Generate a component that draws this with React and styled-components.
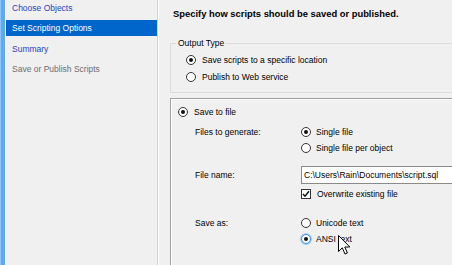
import React from "react";
import styled, { createGlobalStyle } from "styled-components";

const Global = createGlobalStyle`
    body {
        margin: 0;
        background: #f0f0f0;
    }
    * {
        box-sizing: border-box;
    }
`;

const Window = styled.div`
    position: relative;
    display: flex;
    width: 452px;
    height: 265px;
    overflow: hidden;
    background: #f0f0f0;
    font-family: "Liberation Sans", Arial, sans-serif;
    font-size: 8.5px;
    color: #000;
`;

const Strip = styled.div`
    width: 6px;
    flex-shrink: 0;
    background: linear-gradient(to right, #8fc6f8 0 1px, #5eaaf2 1px 5px, #ffffff 5px 6px);
`;

const Nav = styled.div`
    width: 152px;
    flex-shrink: 0;
    display: flex;
    flex-direction: column;
    gap: 4.4px;
    border-right: 1px solid #d2d2d2;
`;

const NavItem = styled.div`
    height: 16px;
    line-height: 16px;
    padding-left: 6px;
    white-space: nowrap;
    color: ${(p) => (p.$selected ? "#fff" : p.$disabled ? "#6d6d6d" : "#1d45c2")};
    background: ${(p) => (p.$selected ? "#0066cc" : "transparent")};
`;

const Main = styled.div`
    flex: 1;
    min-width: 0;
    border-left: 1px solid #fff;
    padding: 8px 0 0 11px;
`;

const Heading = styled.div`
    margin-left: 3px;
    height: 12px;
    line-height: 12px;
    font-size: 9.4px;
    font-weight: bold;
    white-space: nowrap;
`;

const Group = styled.fieldset`
    margin: 17px -40px 0 0;
    padding: 2px 0 7px 5px;
    border: 1px solid #dcdcdc;
    min-inline-size: 0;
`;

const Legend = styled.legend`
    padding: 0 2px;
    line-height: 12px;
`;

const OptionList = styled.div`
    display: flex;
    flex-direction: column;
    padding-left: ${(p) => p.$indent || 0}px;
`;

const Option = styled.label`
    display: flex;
    align-items: center;
    gap: ${(p) => p.$gap || 6}px;
    height: ${(p) => p.$h || 16}px;
    white-space: nowrap;
`;

const Radio = styled.span`
    position: relative;
    width: 10px;
    height: 10px;
    flex-shrink: 0;
    border-radius: 50%;
    background: #fff;
    border: 1px solid ${(p) => (p.$hover ? "#3d8ee0" : "#333")};
    box-shadow: ${(p) => (p.$hover ? "0 0 0 1px #a9d0f6" : "none")};

    &::after {
        content: "";
        display: ${(p) => (p.$checked ? "block" : "none")};
        position: absolute;
        left: 2px;
        top: 2px;
        width: 4px;
        height: 4px;
        border-radius: 50%;
        background: #111;
    }
`;

const Check = styled.span`
    display: flex;
    align-items: center;
    justify-content: center;
    width: 10px;
    height: 10px;
    flex-shrink: 0;
    background: #fff;
    border: 1px solid #333;
`;

const Panel = styled.div`
    margin: 5px -40px 0 0;
    height: 200px;
    padding: 5px 0 0 7px;
    border-top: 1px solid #a0a0a0;
    border-left: 1px solid #a0a0a0;
    box-shadow: inset 1px 1px 0 #fff;
`;

const Form = styled.div`
    margin: 4px 0 0 17px;
    display: flex;
    flex-direction: column;
`;

const Row = styled.div`
    display: flex;
    align-items: flex-start;
    margin-top: ${(p) => p.$top || 0}px;
`;

const Label = styled.div`
    width: 106px;
    flex-shrink: 0;
    line-height: ${(p) => p.$h || 16}px;
    white-space: nowrap;
`;

const TextBox = styled.div`
    flex: 1;
    height: 18px;
    line-height: 16px;
    padding-left: 2px;
    margin-right: -10px;
    background: #fff;
    border: 1px solid #8a8a8a;
    white-space: nowrap;
`;

const Cursor = styled.svg`
    position: absolute;
    left: 338px;
    top: 235px;
`;

const App = () => {
    return (
        <Window>
            <Global />
            <Strip />
            <Nav>
                <NavItem>Choose Objects</NavItem>
                <NavItem $selected>Set Scripting Options</NavItem>
                <NavItem>Summary</NavItem>
                <NavItem $disabled>Save or Publish Scripts</NavItem>
            </Nav>
            <Main>
                <Heading>Specify how scripts should be saved or published.</Heading>

                <Group>
                    <Legend>Output Type</Legend>
                    <OptionList $indent={10}>
                        <Option $h={17}>
                            <Radio $checked />
                            Save scripts to a specific location
                        </Option>
                        <Option $h={17}>
                            <Radio />
                            Publish to Web service
                        </Option>
                    </OptionList>
                </Group>

                <Panel>
                    <Option>
                        <Radio $checked />
                        Save to file
                    </Option>
                    <Form>
                        <Row>
                            <Label>Files to generate:</Label>
                            <OptionList>
                                <Option $gap={5}>
                                    <Radio $checked />
                                    Single file
                                </Option>
                                <Option $gap={5}>
                                    <Radio />
                                    Single file per object
                                </Option>
                            </OptionList>
                        </Row>
                        <Row $top={10}>
                            <Label $h={18}>File name:</Label>
                            <TextBox>{"C:\\Users\\Rain\\Documents\\script.sql"}</TextBox>
                        </Row>
                        <Row $top={2}>
                            <Label />
                            <Option>
                                <Check>
                                    <svg width="8" height="8" viewBox="0 0 8 8">
                                        <path d="M1 4 L3 6.2 L7 1.2" fill="none" stroke="#111" strokeWidth="1.5" />
                                    </svg>
                                </Check>
                                Overwrite existing file
                            </Option>
                        </Row>
                        <Row $top={13}>
                            <Label>Save as:</Label>
                            <OptionList>
                                <Option $gap={5}>
                                    <Radio />
                                    Unicode text
                                </Option>
                                <Option $gap={5}>
                                    <Radio $checked $hover />
                                    ANSI text
                                </Option>
                            </OptionList>
                        </Row>
                    </Form>
                </Panel>
            </Main>

            <Cursor width="13" height="21" viewBox="0 0 13 21">
                <path
                    d="M0.5 0.5 L0.5 16.5 L4.3 12.8 L7 19 L9.4 18 L6.8 12 L11.8 12 Z"
                    fill="#fff"
                    stroke="#000"
                    strokeWidth="1"
                    strokeLinejoin="miter"
                />
            </Cursor>
        </Window>
    );
};

export default App;
